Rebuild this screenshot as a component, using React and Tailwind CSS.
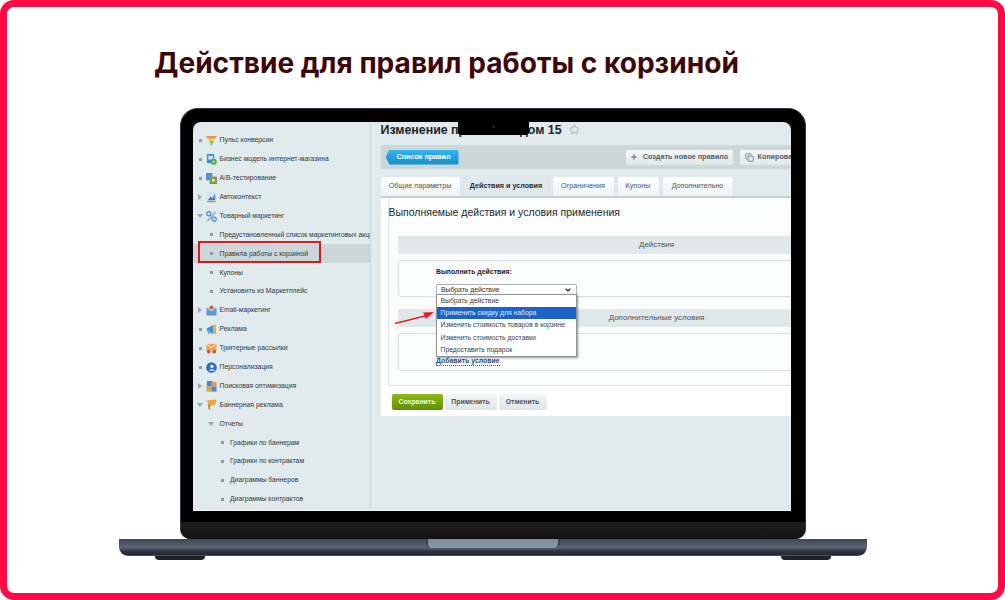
import { Star, Plus, Copy, ChevronDown } from 'lucide-react'

const sans = 'font-["Liberation_Sans",Arial,sans-serif]'

// small menu icons, drawn on a 12x12 box
const icons = {
  funnel: (
    <>
      <path d="M0 1h12L10 4H2z" fill="#e9905a" />
      <path d="M2 4h8L8.800 6.500H3.200z" fill="#e6d24f" />
      <path d="M3.200 6.500h5.600L7.600 9H4.400z" fill="#9cc35a" />
      <path d="M4.400 9h3.200L7 11H5z" fill="#7fb0d0" />
    </>
  ),
  model: (
    <>
      <rect x="1" y="0" width="8" height="10" fill="#3f8fd6" />
      <rect x="2.500" y="2" width="5" height="4" fill="#cfe6f7" />
      <circle cx="8.500" cy="8.500" r="3.200" fill="#44a83c" />
      <path d="M7 8.500h3M8.500 7v3" stroke="#fff" strokeWidth="0.800" />
    </>
  ),
  ab: (
    <>
      <rect x="0" y="0" width="7" height="8" fill="#4d94d8" />
      <rect x="4" y="4" width="8" height="8" fill="#7f9a44" />
      <rect x="6.500" y="6.500" width="3" height="3" fill="#dde6c4" />
    </>
  ),
  context: (
    <>
      <path d="M1 0h10v11H1z" fill="#d6e2ee" />
      <path d="M2 9l3-4 2 2 3-5v7z" fill="#3f78b8" />
      <path d="M1 10.500h10" stroke="#c39a36" strokeWidth="1.200" />
    </>
  ),
  percent: (
    <>
      <circle cx="3" cy="3" r="2.200" fill="none" stroke="#5b93cf" strokeWidth="1.500" />
      <circle cx="9" cy="9" r="2.200" fill="none" stroke="#5b93cf" strokeWidth="1.500" />
      <path d="M10.500 1L1.500 11" stroke="#7aa9dc" strokeWidth="1.600" />
    </>
  ),
  mail: (
    <>
      <rect x="0.500" y="3" width="11" height="8.500" fill="#5c9ad8" />
      <path d="M0.500 3L6 7l5.500-4" fill="#a9cdec" />
      <circle cx="6" cy="2.500" r="2" fill="#d8553f" />
    </>
  ),
  ads: (
    <>
      <path d="M1 4.500L8 1v10L1 7.500z" fill="#3f8fd6" />
      <rect x="8" y="1" width="3" height="10" fill="#e6b23f" />
      <rect x="2" y="7" width="2" height="4" fill="#79a7d4" />
    </>
  ),
  trigger: (
    <>
      <rect x="0.500" y="1" width="11" height="7.500" fill="#eba65c" />
      <path d="M0.500 1L6 5.500 11.500 1" fill="none" stroke="#fff" strokeWidth="0.900" />
      <circle cx="3" cy="9.500" r="2" fill="#d0493a" />
      <circle cx="9" cy="9.500" r="2" fill="#d0493a" />
    </>
  ),
  person: (
    <>
      <circle cx="6" cy="6" r="5.800" fill="#2f6fc4" />
      <circle cx="6.500" cy="4.800" r="1.800" fill="#e6f0fa" />
      <path d="M3.500 9.500c0-2.200 6-2.200 6 0z" fill="#e6f0fa" />
    </>
  ),
  seo: (
    <>
      <rect x="1" y="0" width="6" height="6" fill="#4d86c4" />
      <rect x="6" y="1" width="5.500" height="5" fill="#dba24a" />
      <rect x="0.500" y="6" width="6" height="5.500" fill="#dba24a" />
      <rect x="6.500" y="6" width="5" height="5.500" fill="#4d86c4" />
    </>
  ),
  banner: (
    <>
      <path d="M0.500 1.500L11.500 0.500 10 6.500 4 7.500z" fill="#eda83c" />
      <path d="M2 6l2-1 .8 6.500H3z" fill="#c9812a" />
    </>
  ),
}

const menu = [
  { label: 'Пульс конверсии', icon: 'funnel', mark: 'dot' },
  { label: 'Бизнес модель интернет-магазина', icon: 'model', mark: 'dot' },
  { label: 'A/B-тестирование', icon: 'ab', mark: 'dot' },
  { label: 'Автоконтекст', icon: 'context', mark: 'right' },
  { label: 'Товарный маркетинг', icon: 'percent', mark: 'down' },
  { label: 'Предустановленный список маркетинговых акций', indent: 1, mark: 'dot' },
  { label: 'Правила работы с корзиной', indent: 1, mark: 'dot', active: true },
  { label: 'Купоны', indent: 1, mark: 'dot' },
  { label: 'Установить из Маркетплейс', indent: 1, mark: 'dot' },
  { label: 'Email-маркетинг', icon: 'mail', mark: 'right' },
  { label: 'Реклама', icon: 'ads', mark: 'dot' },
  { label: 'Триггерные рассылки', icon: 'trigger', mark: 'dot' },
  { label: 'Персонализация', icon: 'person', mark: 'dot' },
  { label: 'Поисковая оптимизация', icon: 'seo', mark: 'right' },
  { label: 'Баннерная реклама', icon: 'banner', mark: 'down' },
  { label: 'Отчеты', indent: 1, mark: 'down' },
  { label: 'Графики по баннерам', indent: 2, mark: 'dot' },
  { label: 'Графики по контрактам', indent: 2, mark: 'dot' },
  { label: 'Диаграммы баннеров', indent: 2, mark: 'dot' },
  { label: 'Диаграммы контрактов', indent: 2, mark: 'dot' },
]

function Mark({ type }) {
  if (type === 'dot') return <span className="block h-[3px] w-[3px] bg-[#8d9aa0]" />
  if (type === 'right') {
    return <span className="block h-0 w-0 border-y-[3px] border-l-[4px] border-y-transparent border-l-[#9aa6ac]" />
  }
  return <span className="block h-0 w-0 border-x-[3px] border-t-[4px] border-x-transparent border-t-[#9aa6ac]" />
}

function MenuRow({ item }) {
  const markBox = item.indent === 2 ? 'ml-[27px]' : item.indent === 1 ? 'ml-[16px]' : 'ml-[5px]'
  return (
    <div className={`relative flex h-[18.900px] shrink-0 items-center whitespace-nowrap ${item.active ? 'bg-[#cbd7db]' : ''}`}>
      <span className={`flex w-[5px] shrink-0 justify-center ${markBox}`}>
        <Mark type={item.mark} />
      </span>
      {item.icon ? (
        <>
          <svg viewBox="0 0 12 12" className="ml-[3px] h-[11px] w-[11px] shrink-0">
            {icons[item.icon]}
          </svg>
          <span className="ml-[3px] text-[6.800px] text-[#33383c]">{item.label}</span>
        </>
      ) : (
        <span className={`${item.indent === 2 ? 'ml-[5.500px]' : 'ml-[6px]'} text-[6.800px] text-[#33383c]`}>
          {item.label}
        </span>
      )}
      {item.active && (
        <span className="absolute left-[5px] top-[-3px] h-[22px] w-[123px] border-2 border-[#e8141c]" />
      )}
    </div>
  )
}

function Sidebar() {
  return (
    <aside className="flex w-[178px] shrink-0 flex-col overflow-hidden border-r border-[#c6d3d8] pt-[9px]">
      {menu.map((item) => (
        <MenuRow key={item.label} item={item} />
      ))}
    </aside>
  )
}

function Tab({ label, width, active }) {
  return (
    <div
      className={`flex h-[19px] shrink-0 items-center justify-center rounded-t-[2px] text-[7.200px] ${width} ${
        active
          ? 'bg-[#dfe8ea] font-bold text-[#2b2f33] shadow-[0_0_1px_#97a6ac]'
          : 'bg-gradient-to-b from-white to-[#eef3f4] font-medium text-[#50585e] shadow-[0_0_1px_#aab8bd]'
      }`}
    >
      {label}
    </div>
  )
}

function SectionHead({ label }) {
  return (
    <div className="flex h-[18px] w-[518px] shrink-0 items-center justify-center bg-[#e0e8ea] text-[8px] text-[#4c5459]">
      {label}
    </div>
  )
}

function Editor() {
  return (
    <div className="relative flex h-[187px] w-[518px] flex-col overflow-visible">
      <div className="mt-[6px]">
        <SectionHead label="Действия" />
      </div>
      <div className="mt-[6px] h-[37px] rounded-[3px] border border-[#d5dfe2] pl-[37.500px] pt-[6px]">
        <p className="text-[6.900px] font-bold leading-[10px] text-[#1e2226]">Выполнить действия:</p>
        <div className="mt-[7px] flex h-[12px] w-[141px] items-center justify-between rounded-t-[2px] border border-[#a9b2b6] bg-white px-[4px] text-[6.800px] text-[#333]">
          Выбрать действие
          <ChevronDown size={8} strokeWidth={3.500} className="text-[#222]" />
        </div>
      </div>
      <div className="mt-[12px]">
        <SectionHead label="Дополнительные условия" />
      </div>
      <div className="mt-[6px] flex h-[38px] items-end rounded-[3px] border border-[#d5dfe2] pb-[4px] pl-[37.500px]">
        <span className="border-b border-dotted border-[#2d5f9e] text-[6.900px] font-bold leading-[9px] text-[#1f4a80]">
          Добавить условие
        </span>
      </div>

      {/* open select list */}
      <div className="absolute left-[38px] top-[64px] flex h-[63px] w-[141px] flex-col whitespace-nowrap border border-[#8d9499] bg-white text-[6.800px] text-[#3a3f44] shadow-[1px_1px_2px_rgba(0,0,0,0.4)]">
        <div className="flex flex-1 items-center px-[4px]">Выбрать действие</div>
        <div className="flex flex-1 items-center bg-[#1c63c8] px-[4px] text-[#e4edf8]">Применить скидку для набора</div>
        <div className="flex flex-1 items-center px-[4px]">Изменить стоимость товаров в корзине</div>
        <div className="flex flex-1 items-center px-[4px]">Изменить стоимость доставки</div>
        <div className="flex flex-1 items-center px-[4px]">Предоставить подарок</div>
      </div>

      {/* red pointer */}
      <svg viewBox="0 0 42 16" className="absolute left-[-3px] top-[79px] h-[16px] w-[42px]">
        <path d="M0 14.500L32 6.500" stroke="#ea1c24" strokeWidth="1.600" />
        <path d="M39 3L28 3.500 31 10z" fill="#ea1c24" />
      </svg>
    </div>
  )
}

function Content() {
  return (
    <main className="flex min-w-0 flex-1 flex-col overflow-hidden pl-[10px]">
      <h1 className="mt-[1px] h-[22px] whitespace-nowrap text-[12.400px] font-bold leading-[15px] text-[#202428]">
        Изменение правила кодом 15
        <Star size={11} strokeWidth={1.500} className="ml-[7px] inline-block align-[-1px] text-[#8d9aa0]" />
      </h1>

      <div className="flex h-[24px] shrink-0 items-center justify-between bg-[#ccd7da] pl-[5px]">
        <div className="flex h-[15px] w-[73px] items-center justify-center rounded-r-[2px] bg-gradient-to-b from-[#33b4ee] to-[#0f8fce] pl-[3px] text-[7.200px] font-bold text-white [clip-path:polygon(4px_0,100%_0,100%_100%,4px_100%,0_50%)]">
          Список правил
        </div>
        <div className="flex shrink-0 gap-[7px]">
          <div className="flex h-[15px] w-[107px] items-center justify-center gap-[5px] rounded-[2px] bg-gradient-to-b from-[#f4f7f8] to-[#e0e8ea] text-[7.200px] font-bold text-[#555d62]">
            <Plus size={8} strokeWidth={3} className="text-[#5c666c]" />
            Создать новое правило
          </div>
          <div className="flex h-[15px] w-[51px] items-center gap-[4px] overflow-hidden rounded-l-[2px] bg-gradient-to-b from-[#f4f7f8] to-[#e0e8ea] pl-[5px] text-[7.200px] font-bold whitespace-nowrap text-[#555d62]">
            <Copy size={9} strokeWidth={2.200} className="shrink-0 text-[#687278]" />
            Копировать
          </div>
        </div>
      </div>

      <div className="mt-[8px] flex h-[19px] shrink-0 gap-[4px] overflow-hidden">
        <Tab label="Общие параметры" width="w-[79px]" />
        <Tab label="Действия и условия" width="w-[85px]" active />
        <Tab label="Ограничения" width="w-[61px]" />
        <Tab label="Купоны" width="w-[41px]" />
        <Tab label="Дополнительно" width="w-[70px]" />
      </div>

      <div className="flex shrink-0 flex-col border-t-2 border-[#c6d1d5] bg-white pb-[6px]">
        <div className="ml-[7px] h-[188px] border-b border-l border-[#dde5e8] bg-[#fbfcfc]">
          <h2 className="mt-[8px] h-[24px] text-[10.500px] leading-[13px] text-[#24282c]">
            Выполняемые действия и условия применения
          </h2>
          <div className="pl-[9px]">
            <Editor />
          </div>
        </div>
        <div className="mt-[8px] flex gap-[2px] pl-[11px]">
          <div className="flex h-[16px] w-[51px] items-center justify-center rounded-[2px] bg-gradient-to-b from-[#8fbb14] to-[#5f8e05] text-[6.900px] font-bold text-[#eef6da]">
            Сохранить
          </div>
          <div className="flex h-[16px] w-[52px] items-center justify-center rounded-[2px] bg-gradient-to-b from-[#f4f7f8] to-[#dde5e8] text-[6.900px] font-bold text-[#4c5459]">
            Применить
          </div>
          <div className="flex h-[16px] w-[48px] items-center justify-center rounded-[2px] bg-gradient-to-b from-[#f4f7f8] to-[#dde5e8] text-[6.900px] font-bold text-[#4c5459]">
            Отменить
          </div>
        </div>
      </div>
    </main>
  )
}

function Laptop() {
  return (
    <div className="flex flex-col items-center">
      {/* lid */}
      <div className="flex h-[431px] w-[626px] flex-col overflow-hidden rounded-t-[18px] rounded-b-[10px] border-x border-t border-[#2f3540] bg-black px-[12px] pt-[13px]">
        <div className="relative flex h-[389px] w-[598px] shrink-0 overflow-hidden rounded-t-[8px] border-b border-[#f2f5f6] bg-[#e1eaec]">
          <Sidebar />
          <Content />
          <div className="absolute left-[265px] top-0 flex h-[13px] w-[71px] justify-center rounded-b-[3px] bg-black pt-[3px]">
            <span className="h-[3px] w-[3px] rounded-full bg-[#15233f]" />
          </div>
        </div>
        <div className="h-[11px] shrink-0" />
        <div className="-mx-[12px] h-[17px] shrink-0 bg-gradient-to-b from-[#1f1f20] to-[#121213]" />
      </div>
      {/* base */}
      <div className="flex h-[17px] w-[748px] justify-center rounded-b-[9px] bg-[linear-gradient(180deg,#3f4754_0%,#5c6572_50%,#2b3341_72%,#252c39_92%,#5a606c_100%)]">
        <div className="h-[9px] w-[134px] rounded-b-[5px] border-x-2 border-[#3a414d] bg-gradient-to-b from-[#7d8a9e] to-[#8a97ac]" />
      </div>
      <div className="flex h-[4px] w-[676px] justify-between">
        <div className="h-[4px] w-[50px] rounded-b-[4px] bg-[#1d2129]" />
        <div className="h-[4px] w-[50px] rounded-b-[4px] bg-[#1d2129]" />
      </div>
    </div>
  )
}

export default function App() {
  return (
    <div className={`flex h-[600px] w-[1005px] flex-col items-center overflow-hidden rounded-[14px] border-[7px] border-[#ff0a45] bg-white ${sans}`}>
      <h1 className='mt-[37px] h-[57px] w-full pl-[147px] font-["Inter",sans-serif] text-[28.100px] font-bold leading-[38px] whitespace-nowrap text-[#3f0808]'>
        Действие для правил работы с корзиной
      </h1>
      <div className="mr-[20px] mt-[7px]">
        <Laptop />
      </div>
    </div>
  )
}
